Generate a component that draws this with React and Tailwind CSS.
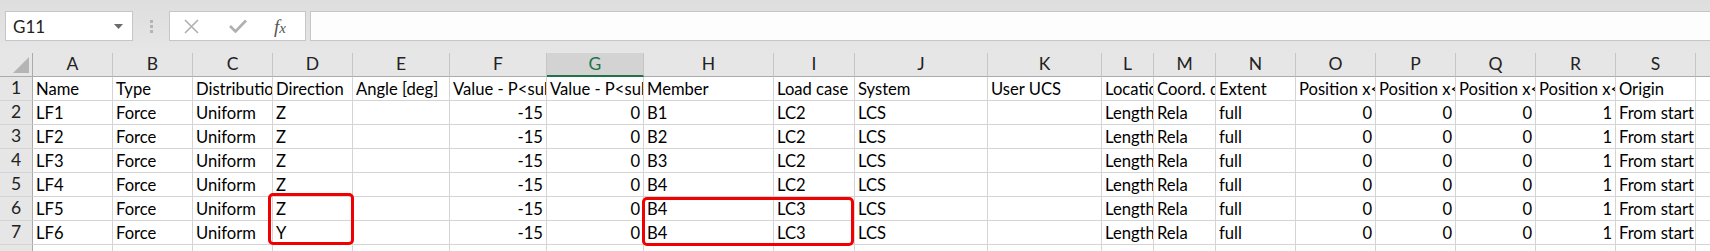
import React from "react";

const cols = [
  { key: "A", w: "w-[80px]" },
  { key: "B", w: "w-[80px]" },
  { key: "C", w: "w-[80px]" },
  { key: "D", w: "w-[80px]" },
  { key: "E", w: "w-[97px]" },
  { key: "F", w: "w-[97px]" },
  { key: "G", w: "w-[97px]" },
  { key: "H", w: "w-[130px]" },
  { key: "I", w: "w-[81px]" },
  { key: "J", w: "w-[133px]" },
  { key: "K", w: "w-[114px]" },
  { key: "L", w: "w-[52px]" },
  { key: "M", w: "w-[62px]" },
  { key: "N", w: "w-[80px]" },
  { key: "O", w: "w-[80px]" },
  { key: "P", w: "w-[80px]" },
  { key: "Q", w: "w-[80px]" },
  { key: "R", w: "w-[80px]" },
  { key: "S", w: "w-[80px]" },
];

const header = [
  "Name",
  "Type",
  "Distribution",
  "Direction",
  "Angle [deg]",
  "Value - P<sub>1</sub>",
  "Value - P<sub>2</sub>",
  "Member",
  "Load case",
  "System",
  "User UCS",
  "Location",
  "Coord. definition",
  "Extent",
  "Position x<sub>1</sub>",
  "Position x<sub>2</sub>",
  "Position x<sub>3</sub>",
  "Position x<sub>4</sub>",
  "Origin",
];

// which columns hold numbers (right aligned)
const numeric = ["F", "G", "O", "P", "Q", "R"];

const loads = [
  ["LF1", "Z", "B1", "LC2"],
  ["LF2", "Z", "B2", "LC2"],
  ["LF3", "Z", "B3", "LC2"],
  ["LF4", "Z", "B4", "LC2"],
  ["LF5", "Z", "B4", "LC3"],
  ["LF6", "Y", "B4", "LC3"],
];

const rows = loads.map(([name, dir, member, lc]) => [
  name,
  "Force",
  "Uniform",
  dir,
  "",
  "-15",
  "0",
  member,
  lc,
  "LCS",
  "",
  "Length",
  "Rela",
  "full",
  "0",
  "0",
  "0",
  "1",
  "From start",
]);

const FormulaBar = () => (
  <div className="flex items-start h-[53px] pt-[11px] bg-[#e6e6e6] bg-gradient-to-b from-[#dedede] to-[#e6e6e6]">
    {/* Name box */}
    <div className="ml-[5px] w-[128px] h-[30px] bg-white border border-[#c6c6c6] flex items-center justify-between pl-[7px] pr-[9px]">
      <span className="text-[17px] text-[#222] leading-none">G11</span>
      <svg width="9" height="5" viewBox="0 0 9 5">
        <path d="M0 0 H9 L4.5 5 Z" fill="#6b6b6b" />
      </svg>
    </div>
    {/* drag handle */}
    <div className="w-[36px] h-[30px] flex flex-col items-center justify-center gap-[2px]">
      <span className="w-[3px] h-[3px] bg-[#b4b4b4]" />
      <span className="w-[3px] h-[3px] bg-[#b4b4b4]" />
      <span className="w-[3px] h-[3px] bg-[#b4b4b4]" />
    </div>
    {/* cancel / enter / fx */}
    <div className="w-[137px] h-[30px] bg-white border border-[#c6c6c6] flex items-center">
      <svg className="ml-[14px]" width="15" height="15" viewBox="0 0 15 15">
        <path d="M1 1 L14 14 M14 1 L1 14" stroke="#b0b0b0" strokeWidth="1.6" />
      </svg>
      <svg className="ml-[30px]" width="18" height="14" viewBox="0 0 18 14">
        <path d="M1 7 L6.5 12.5 L17 1.5" stroke="#b0b0b0" strokeWidth="2.6" fill="none" />
      </svg>
      <span
        className="ml-[27px] text-[19px] italic text-[#555] leading-none"
        style={{ fontFamily: '"Liberation Serif", "DejaVu Serif", serif' }}
      >
        f<span className="text-[15px]">x</span>
      </span>
    </div>
    {/* formula input */}
    <div className="ml-[4px] flex-1 h-[30px] bg-[#fdfdfd] border border-r-0 border-[#c6c6c6]" />
  </div>
);

const App = () => {
  return (
    <div
      className="w-[1710px] h-[251px] overflow-hidden bg-white text-black"
      style={{ fontFamily: 'Lato, "Open Sans", sans-serif' }}
    >
      <FormulaBar />

      <div className="relative">
        {/* column headers */}
        <div className="flex h-[24px] bg-[#e6e6e6]">
          <div className="w-[33px] shrink-0 h-[24px] border-r border-b border-[#ababab] flex items-end justify-end pr-[3px] pb-[3px]">
            <svg width="16" height="16" viewBox="0 0 16 16">
              <path d="M16 0 V16 H0 Z" fill="#b5b5b5" />
            </svg>
          </div>
          {cols.map((c) => (
            <div
              key={c.key}
              className={`${c.w} shrink-0 h-[24px] border-r flex items-center justify-center text-[17.5px] ${
                c.key === "G"
                  ? "bg-[#d3d3d3] text-[#217346] border-r-[#c6c6c6] border-b-2 border-b-[#217346]"
                  : "text-[#222] border-r-[#c6c6c6] border-b border-b-[#ababab]"
              }`}
            >
              {c.key}
            </div>
          ))}
          <div className="flex-1 h-[24px] border-b border-[#ababab]" />
        </div>

        {/* data rows */}
        {[header, ...rows].map((row, r) => (
          <div key={r} className="flex h-[24px]">
            <div className="w-[33px] shrink-0 h-[24px] bg-[#e6e6e6] border-r border-b border-r-[#ababab] border-b-[#d4d4d4] flex items-center justify-center text-[17.5px] text-[#222]">
              {r + 1}
            </div>
            {cols.map((c, i) => (
              <div
                key={c.key}
                className={`${c.w} shrink-0 h-[24px] border-r border-b border-[#d4d4d4] px-[3px] pt-[1px] leading-[23px] text-[16.6px] overflow-hidden whitespace-nowrap ${
                  r > 0 && numeric.includes(c.key) ? "text-right" : "text-left"
                }`}
              >
                {row[i]}
              </div>
            ))}
            <div className="flex-1 h-[24px] border-b border-[#d4d4d4]" />
          </div>
        ))}

        {/* empty row 8 */}
        <div className="flex h-[24px]">
          <div className="w-[33px] shrink-0 h-[24px] bg-[#e6e6e6] border-r border-[#ababab]" />
          {cols.map((c) => (
            <div key={c.key} className={`${c.w} shrink-0 h-[24px] border-r border-[#d4d4d4]`} />
          ))}
        </div>

        {/* annotation boxes */}
        <div className="absolute left-[268px] top-[140px] w-[86px] h-[52px] border-[3px] border-[#f00000] rounded-[5px]" />
        <div className="absolute left-[642px] top-[144px] w-[212px] h-[49px] border-[3px] border-[#f00000] rounded-[5px]" />
      </div>
    </div>
  );
};

export default App;
